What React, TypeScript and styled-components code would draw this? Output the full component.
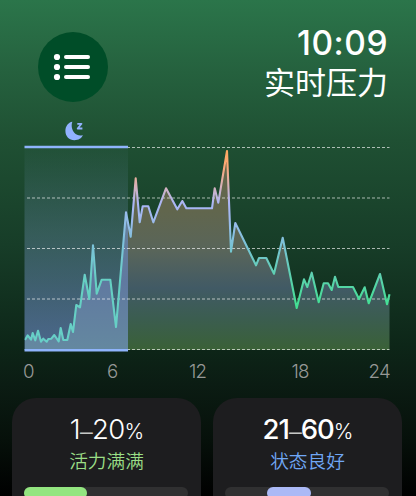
import React from 'react';
import styled, { createGlobalStyle } from 'styled-components';

const Global = createGlobalStyle`
  * { box-sizing: border-box; }
  html, body { margin: 0; background: #000; }
`;

const Screen = styled.main`
  width: 416px;
  height: 496px;
  overflow: hidden;
  display: flex;
  flex-direction: column;
  color: #fff;
  font-family: Inter, "Noto Sans CJK SC", sans-serif;
  background: linear-gradient(180deg, #2b754a 0, #25613e 72px, #1f5033 140px, #173d28 245px, #0d2618 345px, #0b1c13 385px, #06100a 440px, #000 496px);
`;

const Header = styled.header`
  height: 115px;
  flex: none;
  padding: 25px 28px 0 38px;
  display: flex;
  justify-content: space-between;
  align-items: flex-start;
`;

const MenuButton = styled.button`
  width: 70px;
  height: 70px;
  margin-top: 7px;
  padding: 0;
  border: 0;
  border-radius: 50%;
  background: #004d28;
`;

const Heading = styled.div`
  display: flex;
  flex-direction: column;
  align-items: flex-end;
`;

const Clock = styled.time`
  font-size: 33.5px;
  line-height: 36px;
  font-weight: 500;
  letter-spacing: 0.5px;
`;

const Title = styled.h1`
  margin: 0;
  font-size: 31px;
  line-height: 44px;
  font-weight: 400;
`;

const Chart = styled.svg`
  display: block;
  flex: none;
`;

const Axis = styled.div`
  height: 39.5px;
  flex: none;
  padding: 2px 0 0 23px;
  display: grid;
  grid-template-columns: 84px 82px 102.5px 77px 30px;
  color: #969896;
  font: 300 18.7px/23px Inter, sans-serif;
`;

const Tick = styled.span`
  letter-spacing: -0.8px;
  white-space: nowrap;
`;

const Cards = styled.section`
  display: grid;
  grid-template-columns: 189px 189px;
  gap: 12px;
  padding-left: 12px;
  flex: none;
`;

const Card = styled.article`
  height: 130px;
  padding: 16px 12px 0;
  border-radius: 24px;
  background: #1d1d1f;
  text-align: center;
`;

const Range = styled.div<{ $strong?: boolean }>`
  height: 30px;
  padding-left: ${(p) => (p.$strong ? 1 : 1)}px;
  line-height: 30px;
  font-size: 27.5px;
  font-weight: ${(p) => (p.$strong ? 500 : 300)};
  letter-spacing: ${(p) => (p.$strong ? -1 : -0.7)}px;
  white-space: nowrap;
`;

const Dash = styled.span`
  font-family: "Liberation Sans", sans-serif;
  font-weight: 400;
  font-size: 23px;
  color: #c6c8c6;
`;

const Percent = styled.span`
  font-size: 21px;
  font-weight: 300;
  letter-spacing: 0;
`;

const State = styled.div<{ $color: string }>`
  font-size: 18.7px;
  line-height: 26px;
  margin-top: 5px;
  font-weight: 350;
  color: ${(p) => p.$color};
`;

const Track = styled.div`
  margin-top: 12.5px;
  width: 164px;
  height: 12px;
  border-radius: 6px;
  background: #303031;
`;

const Segment = styled.div<{ $start: number; $width: number; $color: string }>`
  width: ${(p) => p.$width}px;
  margin-left: ${(p) => p.$start}px;
  height: 12px;
  border-radius: 6px;
  background: ${(p) => p.$color};
`;

const points: [number, number][] = [
  [25, 340], [27.7, 335.3], [31, 339.7], [32.7, 333], [35.3, 340.3], [38, 330.7], [41, 341.7],
  [43.3, 338.7], [46.7, 341.7], [48.3, 339], [51.3, 338.7], [54.3, 335], [58.7, 341.3],
  [60.7, 328], [63.3, 340], [67.3, 340], [70.7, 324], [73, 332], [76.3, 305], [80, 307.3],
  [84.7, 274.7], [89.3, 299], [93, 245.3], [96.7, 293.7], [101.7, 279.7], [110.3, 279.7],
  [116, 327], [126, 212.3], [130.7, 236.7], [135.7, 178.3], [139.7, 222.3], [142.7, 206.3],
  [148.3, 206.3], [153.3, 222.3], [166, 188.3], [177.3, 209.3], [182.3, 201], [186.3, 208.3],
  [212, 208.3], [214.7, 188.3], [218.3, 202.7], [227, 151], [231, 251.7], [235.3, 223],
  [256, 265.3], [259, 258], [266.3, 258], [274, 273.7], [282.7, 237.7], [296.7, 308],
  [304, 279.3], [307.3, 287], [311.7, 272.7], [318.7, 302.3], [323.7, 283.3], [328, 283.3],
  [331.7, 290], [335, 276.7], [338.3, 287], [353, 287], [359, 299], [364.7, 287.3],
  [368.7, 303.3], [380, 274], [387, 304.3], [389.5, 294.3],
];
const line = 'M' + points.map((p) => p.join(' ')).join('L');
const area = `${line}V350H25Z`;

const ListIcon = () => (
  <svg width="70" height="70" viewBox="0 0 70 70" fill="#fff">
    {[25, 35, 45].map((y) => (
      <g key={y}>
        <circle cx="19" cy={y} r="3.1" />
        <rect x="26" y={y - 2.1} width="26" height="4.2" rx="2" />
      </g>
    ))}
  </svg>
);

const StressChart = () => (
  <Chart width="416" height="243" viewBox="0 115 416 243">
    <defs>
      <linearGradient id="stroke" gradientUnits="userSpaceOnUse" x1="0" y1="151" x2="0" y2="310">
        <stop offset="0" stopColor="#ffa860" />
        <stop offset=".1" stopColor="#fba878" />
        <stop offset=".22" stopColor="#d8b1b8" />
        <stop offset=".33" stopColor="#abb6f6" />
        <stop offset=".42" stopColor="#a0b9ef" />
        <stop offset=".6" stopColor="#78c3d5" />
        <stop offset=".8" stopColor="#5bd2ad" />
        <stop offset="1" stopColor="#3fe28f" />
      </linearGradient>
      <linearGradient id="nightStroke" gradientUnits="userSpaceOnUse" x1="0" y1="200" x2="0" y2="350">
        <stop offset="0" stopColor="#a3b8f2" />
        <stop offset=".3" stopColor="#7cc3da" />
        <stop offset=".55" stopColor="#65d0c2" />
        <stop offset="1" stopColor="#68cfc8" />
      </linearGradient>
      <linearGradient id="area" gradientUnits="userSpaceOnUse" x1="0" y1="151" x2="0" y2="350">
        <stop offset="0" stopColor="#646749" />
        <stop offset=".3" stopColor="#61664d" />
        <stop offset=".5" stopColor="#59655a" />
        <stop offset=".69" stopColor="#415a65" />
        <stop offset=".84" stopColor="#3b5d50" />
        <stop offset="1" stopColor="#3a6137" />
      </linearGradient>
      <linearGradient id="sleep" gradientUnits="userSpaceOnUse" x1="0" y1="148" x2="0" y2="350">
        <stop offset="0" stopColor="#7196be" stopOpacity=".04" />
        <stop offset=".4" stopColor="#7196b8" stopOpacity=".32" />
        <stop offset=".7" stopColor="#7595cf" stopOpacity=".46" />
        <stop offset="1" stopColor="#7b9be5" stopOpacity=".58" />
      </linearGradient>
      <linearGradient id="sleepArea" gradientUnits="userSpaceOnUse" x1="0" y1="212" x2="0" y2="350">
        <stop offset="0" stopColor="#68829b" />
        <stop offset=".5" stopColor="#6079a0" />
        <stop offset="1" stopColor="#6488a0" />
      </linearGradient>
      <clipPath id="night"><rect x="24.5" y="148" width="103.5" height="202" /></clipPath>
      <clipPath id="day"><rect x="128" y="140" width="264" height="212" /></clipPath>
    </defs>
    <path d={area} fill="url(#area)" />
    <rect x="24.5" y="148" width="103.5" height="202" fill="url(#sleep)" />
    <path d={area} fill="url(#sleepArea)" clipPath="url(#night)" />
    <g stroke="#fff" strokeDasharray="3 2">
      <path d="M27 147.5H389.5" strokeOpacity=".64" />
      <path d="M27 198H389.5" strokeWidth="1.6" strokeOpacity=".42" />
      <path d="M27 248.5H389.5" strokeOpacity=".64" />
      <path d="M27 299H389.5" strokeWidth="1.6" strokeOpacity=".42" />
      <path d="M27 349.5H389.5" strokeOpacity=".64" />
    </g>
    <path d={line} fill="none" stroke="url(#stroke)" strokeWidth="2.1" strokeLinejoin="round" clipPath="url(#day)" />
    <path d={line} fill="none" stroke="url(#nightStroke)" strokeWidth="2.1" strokeLinejoin="round" clipPath="url(#night)" />
    <path d="M24.5 147H128M24.5 350.3H128" stroke="#8fb4fc" strokeWidth="2.6" />
    <path d="M72.4 121.8C68.3 122.3 65.4 126.4 65.4 130.9C65.4 136.2 69.3 140.2 74.4 140.2C78.5 140.2 81.7 138.4 82.8 135C79.9 136.2 76.6 135.2 74.3 132.7C71.8 129.9 71 125.2 72.4 121.8Z" fill="#92b2ff" />
    <path d="M77.3 123.8H81.5L77.7 128.5H82.4" fill="none" stroke="#92b2ff" strokeWidth="1.8" strokeLinejoin="round" />
  </Chart>
);

export default function App() {
  return (
    <>
      <Global />
      <Screen>
        <Header>
          <MenuButton aria-label="列表"><ListIcon /></MenuButton>
          <Heading>
            <Clock>10:09</Clock>
            <Title>实时压力</Title>
          </Heading>
        </Header>
        <StressChart />
        <Axis>
          <Tick>0</Tick>
          <Tick>6</Tick>
          <Tick>12</Tick>
          <Tick>18</Tick>
          <Tick>24</Tick>
        </Axis>
        <Cards>
          <Card>
            <Range>1<Dash>–</Dash>20<Percent>%</Percent></Range>
            <State $color="#9ade86">活力满满</State>
            <Track><Segment $start={0} $width={63} $color="#93e580" /></Track>
          </Card>
          <Card>
            <Range $strong>21<Dash>–</Dash>60<Percent>%</Percent></Range>
            <State $color="#70a7f5">状态良好</State>
            <Track><Segment $start={42} $width={44} $color="#abb9f6" /></Track>
          </Card>
        </Cards>
      </Screen>
    </>
  );
}
